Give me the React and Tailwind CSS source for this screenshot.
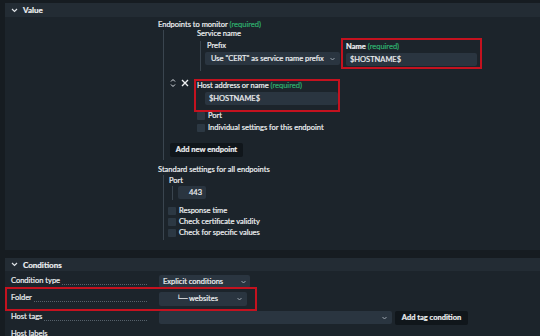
import React from "react";

const Chevron = () => (
  <svg width="7" height="5" viewBox="0 0 7 5" className="shrink-0">
    <path d="M1 1 L3.5 3.5 L6 1" fill="none" stroke="#dfe3e7" strokeWidth="1.2" />
  </svg>
);

const Caret = () => (
  <svg width="5" height="4" viewBox="0 0 5 4" className="shrink-0">
    <path d="M0.5 1 L2.5 3 L4.5 1" fill="none" stroke="#9aa4ad" strokeWidth="1" />
  </svg>
);

const Req = () => <span className="text-[#2fae6e]"> (required)</span>;

const Check = ({ label }) => (
  <div className="flex items-center gap-[3px] h-[8px] whitespace-nowrap">
    <div className="w-[8px] h-[8px] bg-[#2c3843] rounded-[1px]" />
    <span className="leading-[8px]">{label}</span>
  </div>
);

const Leader = () => (
  <div className="flex-1 ml-[2px] mr-[12px] mb-[2px] self-end border-b border-dotted border-[#56616b]" />
);

export default function App() {
  return (
    <div className="w-[540px] h-[336px] overflow-hidden bg-[#161c21] text-[#eef0f2] text-[7.5px] font-[Lato,sans-serif] leading-none whitespace-nowrap [-webkit-text-stroke:0.2px]">
      {/* VALUE SECTION */}
      <div className="pt-[3px] pl-[5px]">
        <div className="h-[14px] bg-[#232c34] flex items-center pl-[6px] gap-[5px]">
          <Chevron />
          <span className="font-bold text-[8px]">Value</span>
        </div>
        <div className="bg-[#1c242b] h-[233px] pl-[153px]">
          <div className="pt-[3px] h-[13px] flex items-center">
            <span>
              Endpoints to monitor<Req />
            </span>
          </div>
          {/* endpoint list block */}
          <div className="ml-[5px] border-l border-[#3a454f] pb-[3px]">
            <div className="pl-[33px] h-[8px] flex items-center">Service name</div>
            <div className="ml-[36px] flex items-start">
              <div className="border-l border-[#3a454f] pl-[4px] mt-[3px] h-[30px]">
                <div className="h-[10px] flex items-center pl-[2px]">Prefix</div>
                <div className="mt-[1px] w-[135px] h-[13px] bg-[#2a3540] rounded-[2px] flex items-center justify-between pl-[6px] pr-[5px]">
                  <span>Use "CERT" as service name prefix</span>
                  <Caret />
                </div>
              </div>
              <div className="ml-[1px] w-[141px] h-[31px] border-2 border-[#c4121f] pt-[2px] px-[3px]">
                <div className="h-[10px] flex items-center font-bold">
                  <span>
                    Name<span className="font-normal text-[#2fae6e]"> (required)</span>
                  </span>
                </div>
                <div className="mt-[1px] h-[13px] bg-[#2a3540] rounded-[2px] flex items-center px-[4px]">
                  $HOSTNAME$
                </div>
              </div>
            </div>
            {/* host row */}
            <div className="mt-[8px] flex items-start pl-[6px]">
              <div className="w-[24px] flex items-center gap-[5px] -mt-[1px]">
                <svg width="6" height="10" viewBox="0 0 6 10">
                  <path d="M1 3.5 L3 1.5 L5 3.5 M1 6.5 L3 8.5 L5 6.5" fill="none" stroke="#dfe3e7" strokeWidth="1" />
                </svg>
                <svg width="8" height="8" viewBox="0 0 8 8">
                  <path d="M1 1 L7 7 M7 1 L1 7" fill="none" stroke="#eef0f2" strokeWidth="1.4" />
                </svg>
              </div>
              <div className="w-[146px] h-[33px] border-2 border-[#c4121f]">
                <div className="h-[10px] flex items-center pl-[1px]">
                  <span>
                    Host address or name<Req />
                  </span>
                </div>
                <div className="mt-[1px] ml-[9px] w-[133px] h-[13px] bg-[#2a3540] rounded-[2px] flex items-center px-[4px]">
                  $HOSTNAME$
                </div>
              </div>
            </div>
            <div className="pl-[33px] flex flex-col gap-[4px]">
              <Check label="Port" />
              <Check label="Individual settings for this endpoint" />
            </div>
            <div className="mt-[11px] ml-[6px] w-[73px] h-[14px] bg-[#10161b] rounded-[2px] flex items-center justify-center font-bold">
              Add new endpoint
            </div>
          </div>
          <div className="mt-[5px] h-[10px] flex items-center">Standard settings for all endpoints</div>
          <div className="ml-[5px] border-l border-[#3a454f] h-[65px]">
            <div className="pl-[5px] h-[11px] flex items-center">Port</div>
            <div className="ml-[8px] border-l border-[#3a454f] pl-[5px] h-[14px]">
              <div className="w-[28px] h-[13px] bg-[#2a3540] rounded-[2px] flex items-center justify-end pr-[4px]">
                443
              </div>
            </div>
            <div className="pl-[4px] mt-[7px] flex flex-col gap-[3px]">
              <Check label="Response time" />
              <Check label="Check certificate validity" />
              <Check label="Check for specific values" />
            </div>
          </div>
        </div>
      </div>

      {/* CONDITIONS SECTION */}
      <div className="mt-[8px] pl-[5px]">
        <div className="h-[13px] bg-[#232c34] flex items-center pl-[6px] gap-[5px]">
          <Chevron />
          <span className="font-bold text-[8px]">Conditions</span>
        </div>
        <div className="bg-[#1c242b] h-[80px] pt-[4px]">
          <div className="flex items-center h-[13px]">
            <div className="w-[154px] flex pl-[6px] h-[10px]">
              <span>Condition type</span>
              <Leader />
            </div>
            <div className="w-[91px] h-[13px] bg-[#2a3540] rounded-[2px] flex items-center justify-between px-[4px]">
              <span>Explicit conditions</span>
              <Caret />
            </div>
          </div>
          <div className="relative flex items-center h-[21px]">
            <div className="absolute left-0 -top-px w-[252px] h-[24px] border-2 border-[#c4121f]" />
            <div className="w-[154px] flex pl-[6px] h-[10px]">
              <span>Folder</span>
              <Leader />
            </div>
            <div className="w-[88px] h-[14px] bg-[#2a3540] rounded-[2px] flex items-center justify-between pl-[17px] pr-[5px]">
              <span>└─ websites</span>
              <Caret />
            </div>
          </div>
          <div className="flex items-center h-[17px]">
            <div className="w-[154px] flex pl-[6px] h-[10px]">
              <span>Host tags</span>
              <Leader />
            </div>
            <div className="w-[233px] h-[13px] bg-[#2a3540] rounded-[2px] flex items-center justify-end px-[5px]">
              <Caret />
            </div>
            <div className="ml-[3px] w-[73px] h-[14px] bg-[#10161b] rounded-[2px] flex items-center justify-center font-bold">
              Add tag condition
            </div>
          </div>
          <div className="flex items-center h-[12px] mt-[3px]">
            <div className="w-[154px] flex pl-[6px] h-[10px]">
              <span>Host labels</span>
            </div>
          </div>
        </div>
      </div>
    </div>
  );
}
